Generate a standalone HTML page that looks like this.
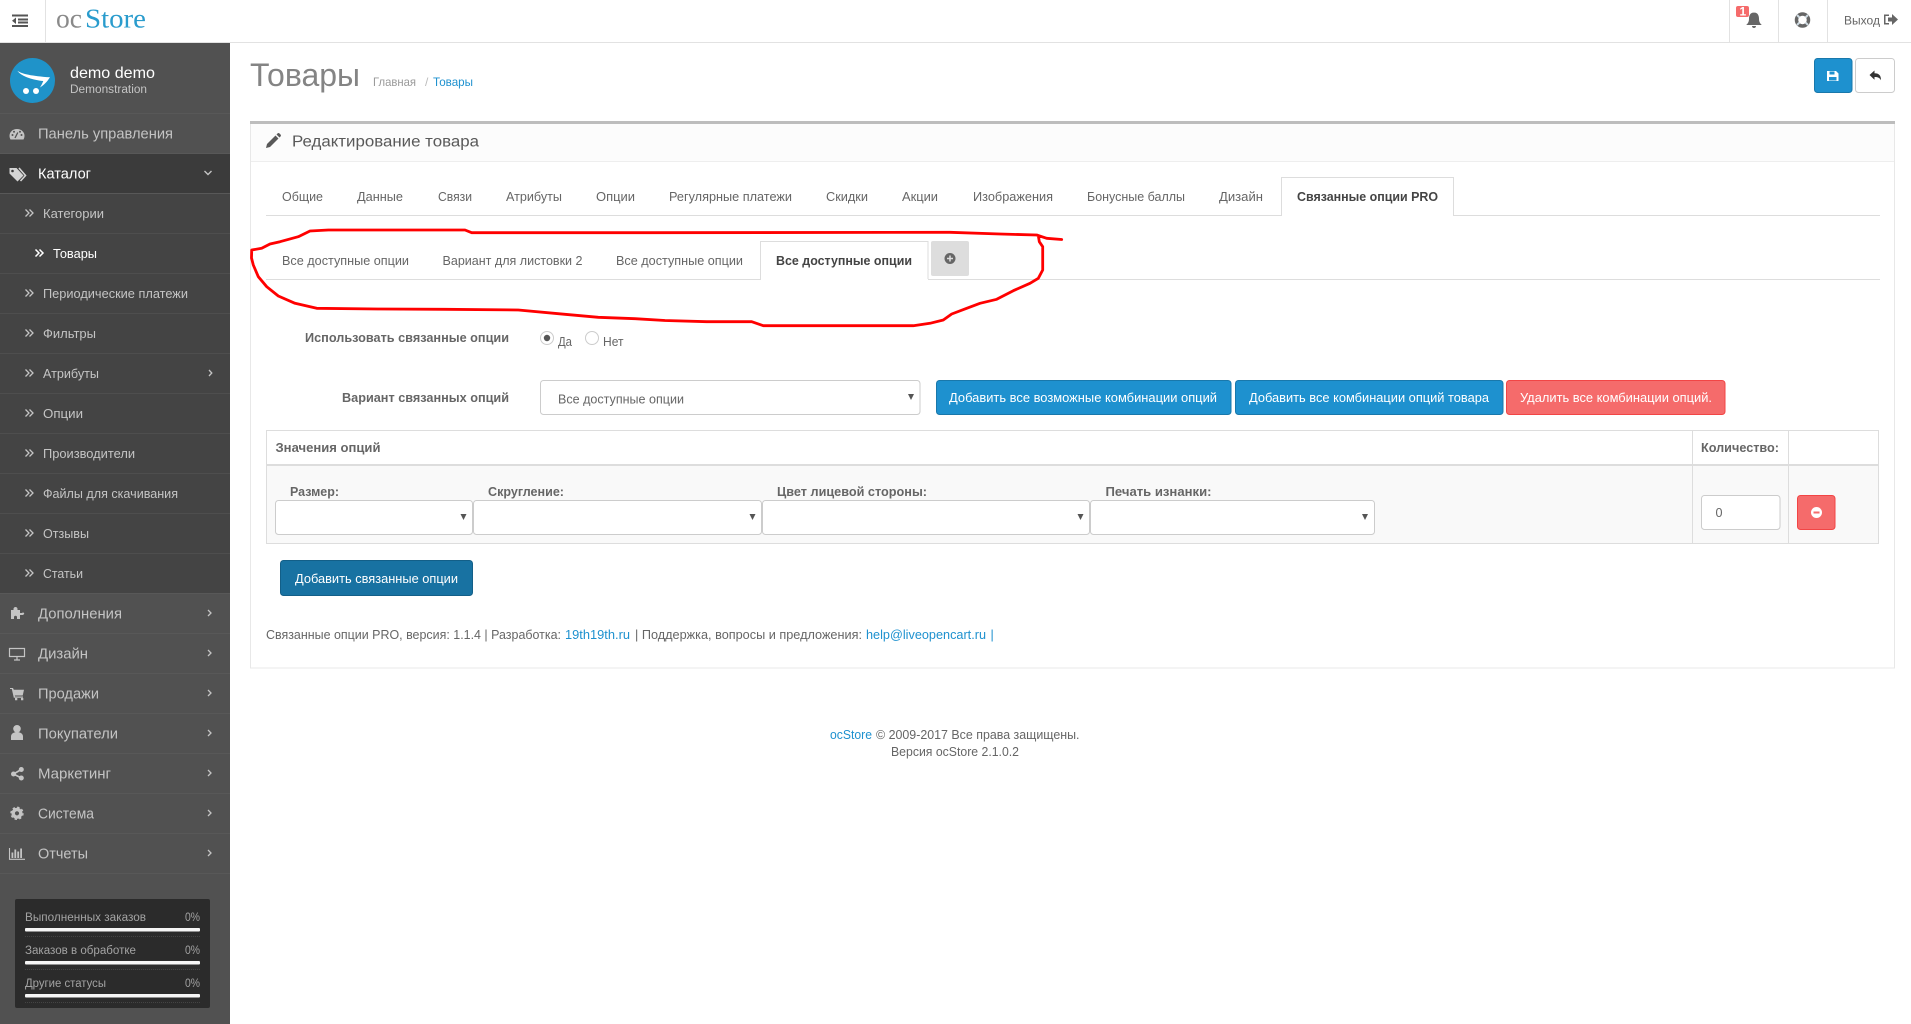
<!DOCTYPE html>
<html lang="ru"><head><meta charset="utf-8"><title>Товары</title>
<style>
html,body{margin:0;padding:0;width:1911px;height:1024px;overflow:hidden;background:#fff}
svg{display:block}
text{font-family:"Liberation Sans",Arial,sans-serif;font-size:12.5px;fill:#666}
.b{font-weight:bold}
.t{font-size:15px;fill:#c4c4c4}
.s{font-size:12.5px;fill:#c4c4c4}
.w{fill:#fff}
.a{fill:#1e91cf}
.st{font-size:11.5px;fill:#a3a3a3}
.ic{fill:#c4c4c4}
.sel{fill:#fff;stroke:#ccc}
.ar{fill:#555}
</style></head><body>
<svg xmlns="http://www.w3.org/2000/svg" width="1911" height="1024" viewBox="0 0 1911 1024">
<rect width="1911" height="1024" fill="#fff"/>

<!-- header -->
<rect x="0" y="42" width="1911" height="1" fill="#e2e2e2"/>
<rect x="45" y="0" width="1" height="42" fill="#e2e2e2"/>
<path d="M12 14.500h16v2h-16zM18 18.500h10v2h-10zM18 21.500h10v2h-10zM12 25h16v2h-16zM16 17.500v6.500l-4-3.300z" fill="#555"/>
<text x="56" y="27.500" textLength="26" lengthAdjust="spacingAndGlyphs" style="font-family:'Liberation Serif',serif;font-size:27px;fill:#8a8a8a">oc</text>
<text x="85" y="27.500" textLength="61" lengthAdjust="spacingAndGlyphs" style="font-family:'Liberation Serif',serif;font-size:27px;fill:#2a9ccd">Store</text>
<rect x="1729" y="0" width="1" height="42" fill="#e2e2e2"/>
<rect x="1778" y="0" width="1" height="42" fill="#e2e2e2"/>
<rect x="1827" y="0" width="1" height="42" fill="#e2e2e2"/>
<path d="M1754 12.500c-3.500 0-5 2.800-5 6 0 3.500-1 4.800-2.800 6.500h15.600c-1.800-1.700-2.800-3-2.800-6.500 0-3.200-1.500-6-5-6zM1752 26h4c0 1.300-.9 2-2 2s-2-.7-2-2z" fill="#666"/>
<rect x="1736" y="6" width="13" height="11" rx="2" fill="#f56b6b"/>
<text x="1739.500" y="15.500" class="b w" style="font-size:12px">1</text>
<circle cx="1802.500" cy="20" r="6" fill="none" stroke="#666" stroke-width="3.500"/>
<path d="M1797 15l2.500 2.500M1808 15l-2.500 2.500M1797 25l2.500-2.500M1808 25l-2.500-2.500" stroke="#cfdbe3" stroke-width="2"/>
<text x="1844" y="24.500" textLength="36" lengthAdjust="spacingAndGlyphs" style="font-size:12px">Выход</text>
<path d="M1889 14.500h-5v10h5v-1.500h-3.500v-7h3.500z" fill="#666"/><path d="M1888 17.500h4v-3.500l6 5.500-6 5.500v-3.500h-4z" fill="#666"/>

<!-- sidebar -->
<rect x="0" y="43" width="230" height="981" fill="#515151"/>
<rect x="0" y="153" width="230" height="40" fill="#3b3b3b"/>
<rect x="0" y="193" width="230" height="400" fill="#444"/>
<circle cx="32.500" cy="80.500" r="22.500" fill="#1f93c9"/>
<path d="M17.300 70.700C22 74 32 76 50 77.300 47 82 44 85 40 87.500 41.500 85 42.500 83 43.300 81 34 80 22 77 17.300 70.700z" fill="#fff"/>
<circle cx="26" cy="91" r="3" fill="#fff"/><circle cx="36" cy="91" r="3" fill="#fff"/>
<text x="70" y="78" textLength="85" lengthAdjust="spacingAndGlyphs" class="w" style="font-size:16px">demo demo</text>
<text x="70" y="93" textLength="77" lengthAdjust="spacingAndGlyphs" style="font-size:11.500px;fill:#c4c4c4">Demonstration</text>

<g fill="#585858">
<rect x="0" y="113" width="230" height="1"/><rect x="0" y="153" width="230" height="1"/><rect x="0" y="193" width="230" height="1"/>
<rect x="0" y="593" width="230" height="1"/><rect x="0" y="633" width="230" height="1"/><rect x="0" y="673" width="230" height="1"/><rect x="0" y="713" width="230" height="1"/><rect x="0" y="753" width="230" height="1"/><rect x="0" y="793" width="230" height="1"/><rect x="0" y="833" width="230" height="1"/><rect x="0" y="873" width="230" height="1"/>
</g>
<g fill="#4e4e4e">
<rect x="0" y="233" width="230" height="1"/><rect x="0" y="273" width="230" height="1"/><rect x="0" y="313" width="230" height="1"/><rect x="0" y="353" width="230" height="1"/><rect x="0" y="393" width="230" height="1"/><rect x="0" y="433" width="230" height="1"/><rect x="0" y="473" width="230" height="1"/><rect x="0" y="513" width="230" height="1"/><rect x="0" y="553" width="230" height="1"/>
</g>

<text x="38" y="138.500" textLength="135" lengthAdjust="spacingAndGlyphs" class="t">Панель управления</text>
<text x="38" y="178.500" textLength="53" lengthAdjust="spacingAndGlyphs" class="t w">Каталог</text>
<text x="43" y="218" textLength="61" lengthAdjust="spacingAndGlyphs" class="s">Категории</text>
<text x="53" y="258" textLength="44" lengthAdjust="spacingAndGlyphs" class="s w">Товары</text>
<text x="43" y="298" textLength="145" lengthAdjust="spacingAndGlyphs" class="s">Периодические платежи</text>
<text x="43" y="338" textLength="53" lengthAdjust="spacingAndGlyphs" class="s">Фильтры</text>
<text x="43" y="378" textLength="56" lengthAdjust="spacingAndGlyphs" class="s">Атрибуты</text>
<text x="43" y="418" textLength="40" lengthAdjust="spacingAndGlyphs" class="s">Опции</text>
<text x="43" y="458" textLength="92" lengthAdjust="spacingAndGlyphs" class="s">Производители</text>
<text x="43" y="498" textLength="135" lengthAdjust="spacingAndGlyphs" class="s">Файлы для скачивания</text>
<text x="43" y="538" textLength="46" lengthAdjust="spacingAndGlyphs" class="s">Отзывы</text>
<text x="43" y="578" textLength="40" lengthAdjust="spacingAndGlyphs" class="s">Статьи</text>
<text x="38" y="618.500" textLength="84" lengthAdjust="spacingAndGlyphs" class="t">Дополнения</text>
<text x="38" y="658.500" textLength="50" lengthAdjust="spacingAndGlyphs" class="t">Дизайн</text>
<text x="38" y="698.500" textLength="61" lengthAdjust="spacingAndGlyphs" class="t">Продажи</text>
<text x="38" y="738.500" textLength="80" lengthAdjust="spacingAndGlyphs" class="t">Покупатели</text>
<text x="38" y="778.500" textLength="73" lengthAdjust="spacingAndGlyphs" class="t">Маркетинг</text>
<text x="38" y="818.500" textLength="56" lengthAdjust="spacingAndGlyphs" class="t">Система</text>
<text x="38" y="858.500" textLength="50" lengthAdjust="spacingAndGlyphs" class="t">Отчеты</text>

<!-- sub arrows -->
<g fill="none" stroke="#c4c4c4" stroke-width="1.300">
<path d="M25.500 209.500l3.500 3.500-3.500 3.500M29.500 209.500l3.500 3.500-3.500 3.500"/>
<path d="M25.500 289.500l3.500 3.500-3.500 3.500M29.500 289.500l3.500 3.500-3.500 3.500"/>
<path d="M25.500 329.500l3.500 3.500-3.500 3.500M29.500 329.500l3.500 3.500-3.500 3.500"/>
<path d="M25.500 369.500l3.500 3.500-3.500 3.500M29.500 369.500l3.500 3.500-3.500 3.500"/>
<path d="M25.500 409.500l3.500 3.500-3.500 3.500M29.500 409.500l3.500 3.500-3.500 3.500"/>
<path d="M25.500 449.500l3.500 3.500-3.500 3.500M29.500 449.500l3.500 3.500-3.500 3.500"/>
<path d="M25.500 489.500l3.500 3.500-3.500 3.500M29.500 489.500l3.500 3.500-3.500 3.500"/>
<path d="M25.500 529.500l3.500 3.500-3.500 3.500M29.500 529.500l3.500 3.500-3.500 3.500"/>
<path d="M25.500 569.500l3.500 3.500-3.500 3.500M29.500 569.500l3.500 3.500-3.500 3.500"/>
<path d="M35.500 249.500l3.500 3.500-3.500 3.500M39.500 249.500l3.500 3.500-3.500 3.500" stroke="#fff" stroke-width="1.500"/>
<path d="M204.500 171l3.500 3.500 3.500-3.500" stroke-width="1.400"/>
<path d="M209 370l2.800 3-2.800 3"/>
<path d="M208 610l3 3-3 3M208 650l3 3-3 3M208 690l3 3-3 3M208 730l3 3-3 3M208 770l3 3-3 3M208 810l3 3-3 3M208 850l3 3-3 3"/>
</g>

<!-- top icons -->
<path d="M10.500 139.500c-.7-1.300-1-2.500-1-3.700 0-3.800 3.300-6.800 7.500-6.800s7.500 3 7.500 6.800c0 1.200-.3 2.400-1 3.700z" class="ic"/>
<path d="M15 138l2.800-5.500" stroke="#515151" stroke-width="1.300"/><circle cx="12.500" cy="135" r="1" fill="#515151"/><circle cx="21.500" cy="135" r="1" fill="#515151"/><circle cx="14" cy="131.800" r="1" fill="#515151"/><circle cx="20" cy="131.800" r="1" fill="#515151"/>
<path d="M9.500 168h7l7 7.500-6 6-8-8z" fill="#d4d4d4"/><path d="M19 168l6.500 7.500-5 5.500" fill="none" stroke="#d4d4d4" stroke-width="1.600"/><circle cx="12.500" cy="171" r="1.300" fill="#3b3b3b"/>
<path d="M11 610h2.500v-1.200c0-1 1-1.800 2-1.800s2 .8 2 1.800v1.200h2.500v3h2c.8-.8 1.500-.6 2 0s0 2-2 2h-2v4H17v-2c0-.8-.7-1.300-1.500-1.300s-1.500.5-1.500 1.300v2H11z" class="ic"/>
<path d="M9.500 648.500h15v8h-15zM14 660h6M17 656.500v3.500" fill="none" stroke="#c4c4c4" stroke-width="1.200"/>
<path d="M10 688h3l.8 1.800h10.200l-1.300 5.700h-7.900l.3 1h7.900v1.200h-9.200l-2-8.700h-1.800zM15 698h2.300v2.200H15zM21 698h2.300v2.200H21z" class="ic"/>
<circle cx="17" cy="728.800" r="3.800" class="ic"/><path d="M11 740v-3.500c0-2.700 2.700-4.500 6-4.500s6 1.800 6 4.500v3.500z" class="ic"/>
<circle cx="21.300" cy="769.500" r="2.500" class="ic"/><circle cx="13.500" cy="774" r="2.500" class="ic"/><circle cx="21.300" cy="778" r="2.500" class="ic"/><path d="M13.500 774l7.800-4.500M13.500 774l7.800 4" stroke="#c4c4c4" stroke-width="1.600"/>
<circle cx="17" cy="813.300" r="3.800" fill="none" stroke="#c4c4c4" stroke-width="3.400"/><circle cx="17" cy="813.300" r="6" fill="none" stroke="#c4c4c4" stroke-width="1.400" stroke-dasharray="2.400 2.300"/>
<path d="M9.500 848v11.300h15.500" fill="none" stroke="#c4c4c4" stroke-width="1.100"/><path d="M11.500 852.500h1.800v5.500h-1.800zM14.400 849.500h1.800v8.500h-1.800zM17.300 851.500h1.800v6.500h-1.800zM20.200 848.500h1.800v9.500h-1.800z" class="ic"/>

<!-- stats -->
<rect x="15" y="899" width="195" height="109" rx="2" fill="#2b2b2b"/>
<text x="25" y="921" textLength="121" lengthAdjust="spacingAndGlyphs" class="st">Выполненных заказов</text>
<text x="185" y="921" textLength="15" lengthAdjust="spacingAndGlyphs" class="st">0%</text>
<rect x="25" y="928" width="175" height="3.500" rx="1" fill="#f5f5f5"/>
<text x="25" y="954" textLength="111" lengthAdjust="spacingAndGlyphs" class="st">Заказов в обработке</text>
<text x="185" y="954" textLength="15" lengthAdjust="spacingAndGlyphs" class="st">0%</text>
<rect x="25" y="961" width="175" height="3.500" rx="1" fill="#f5f5f5"/>
<text x="25" y="987" textLength="81" lengthAdjust="spacingAndGlyphs" class="st">Другие статусы</text>
<text x="185" y="987" textLength="15" lengthAdjust="spacingAndGlyphs" class="st">0%</text>
<rect x="25" y="994" width="175" height="3.500" rx="1" fill="#f5f5f5"/>
<path d="M25 936.500h175M25 969.500h175M25 1002.500h175" stroke="#444" stroke-dasharray="1 1"/>

<!-- page header -->
<text x="250" y="86" textLength="110" lengthAdjust="spacingAndGlyphs" style="font-size:32px;fill:#848484">Товары</text>
<text x="373" y="86" textLength="43" lengthAdjust="spacingAndGlyphs" style="font-size:12px;fill:#999">Главная</text>
<text x="425" y="86" style="font-size:12px;fill:#bbb">/</text>
<text x="433" y="86" textLength="40" lengthAdjust="spacingAndGlyphs" class="a" style="font-size:12px">Товары</text>
<rect x="1814.500" y="58.500" width="37.500" height="34" rx="3" fill="#1e91cf" stroke="#1978ab"/>
<path d="M1827 71h9l2.500 2.500V81h-11.500z" fill="#fff"/><rect x="1829.500" y="71.500" width="5" height="3" fill="#1e91cf"/><rect x="1829" y="77" width="7.500" height="3.500" fill="#1e91cf"/>
<rect x="1855.500" y="58.500" width="39" height="34" rx="3" fill="#fff" stroke="#ccc"/>
<path d="M1869.500 75l5-4.500v2.800c4.500 0 6.500 2.200 6.500 7-1.200-2.400-3-3.300-6.500-3.300v2.700z" fill="#333"/>

<!-- panel -->
<rect x="250.500" y="122" width="1644" height="546" fill="#fff" stroke="#e8e8e8"/>
<rect x="251" y="124" width="1643" height="37" fill="#fcfcfc"/>
<rect x="251" y="161" width="1643" height="1" fill="#eee"/>
<rect x="250" y="121" width="1645" height="3" fill="#bdbdbd"/>
<path d="M266 148l1-4 8.500-8.500 3 3-8.500 8.500zM276.500 134.500l1-1c.6-.6 1.400-.6 2 0l1 1c.6.6.6 1.400 0 2l-1 1z" fill="#595959"/>
<text x="292" y="146.500" textLength="187" lengthAdjust="spacingAndGlyphs" style="font-size:15.500px;fill:#595959">Редактирование товара</text>

<!-- tabs 1 -->
<rect x="266" y="215" width="1614" height="1" fill="#ddd"/>
<path d="M1281.500 215.500V177.500h172v38" fill="#fff" stroke="#ddd"/>
<rect x="1282" y="215" width="171" height="2" fill="#fff"/>
<text x="282" y="201" textLength="41" lengthAdjust="spacingAndGlyphs">Общие</text>
<text x="357" y="201" textLength="46" lengthAdjust="spacingAndGlyphs">Данные</text>
<text x="438" y="201" textLength="34" lengthAdjust="spacingAndGlyphs">Связи</text>
<text x="506" y="201" textLength="56" lengthAdjust="spacingAndGlyphs">Атрибуты</text>
<text x="596" y="201" textLength="39" lengthAdjust="spacingAndGlyphs">Опции</text>
<text x="669" y="201" textLength="123" lengthAdjust="spacingAndGlyphs">Регулярные платежи</text>
<text x="826" y="201" textLength="42" lengthAdjust="spacingAndGlyphs">Скидки</text>
<text x="902" y="201" textLength="36" lengthAdjust="spacingAndGlyphs">Акции</text>
<text x="973" y="201" textLength="80" lengthAdjust="spacingAndGlyphs">Изображения</text>
<text x="1087" y="201" textLength="98" lengthAdjust="spacingAndGlyphs">Бонусные баллы</text>
<text x="1219" y="201" textLength="44" lengthAdjust="spacingAndGlyphs">Дизайн</text>
<text x="1297" y="201" textLength="141" lengthAdjust="spacingAndGlyphs" class="b" style="fill:#444">Связанные опции PRO</text>

<!-- tabs 2 -->
<rect x="266" y="279" width="1614" height="1" fill="#ddd"/>
<path d="M760.500 279.500V241.500h167.500v38" fill="#fff" stroke="#ddd"/>
<rect x="761" y="279" width="167" height="2" fill="#fff"/>
<text x="282" y="265" textLength="127" lengthAdjust="spacingAndGlyphs">Все доступные опции</text>
<text x="442.500" y="265" textLength="140" lengthAdjust="spacingAndGlyphs">Вариант для листовки 2</text>
<text x="616" y="265" textLength="127" lengthAdjust="spacingAndGlyphs">Все доступные опции</text>
<text x="776" y="265" textLength="136" lengthAdjust="spacingAndGlyphs" class="b" style="fill:#444">Все доступные опции</text>
<rect x="931" y="241" width="38" height="35" rx="2" fill="#ddd"/>
<circle cx="950" cy="258.500" r="5.500" fill="#666"/><path d="M947 258.500h6M950 255.500v6" stroke="#ddd" stroke-width="1.500"/>

<!-- form -->
<text x="305" y="342" textLength="204" lengthAdjust="spacingAndGlyphs" class="b">Использовать связанные опции</text>
<circle cx="547" cy="338" r="6.500" fill="#fff" stroke="#ccc"/><circle cx="547" cy="338" r="3.200" fill="#555"/>
<text x="558" y="346" textLength="14" lengthAdjust="spacingAndGlyphs">Да</text>
<circle cx="592" cy="338" r="6.500" fill="#fff" stroke="#ccc"/>
<text x="603" y="346" textLength="20.500" lengthAdjust="spacingAndGlyphs">Нет</text>

<text x="342" y="402" textLength="167" lengthAdjust="spacingAndGlyphs" class="b">Вариант связанных опций</text>
<rect x="540.500" y="380.500" width="379.500" height="34" rx="3" class="sel"/>
<text x="558" y="403.500" textLength="126" lengthAdjust="spacingAndGlyphs">Все доступные опции</text>
<path d="M908 394h6l-3 6z" class="ar"/>

<rect x="936.500" y="380.500" width="294.500" height="34" rx="3" fill="#1e91cf" stroke="#1978ab"/>
<text x="949" y="402" textLength="268" lengthAdjust="spacingAndGlyphs" class="w">Добавить все возможные комбинации опций</text>
<rect x="1235.500" y="380.500" width="267.500" height="34" rx="3" fill="#1e91cf" stroke="#1978ab"/>
<text x="1249" y="402" textLength="240" lengthAdjust="spacingAndGlyphs" class="w">Добавить все комбинации опций товара</text>
<rect x="1506.500" y="380.500" width="218.500" height="34" rx="3" fill="#f56b6b" stroke="#f24545"/>
<text x="1520" y="402" textLength="192" lengthAdjust="spacingAndGlyphs" class="w">Удалить все комбинации опций.</text>

<!-- table -->
<rect x="266.500" y="430.500" width="1612" height="113" fill="#fff" stroke="#ddd"/>
<rect x="267" y="466" width="1611" height="77" fill="#f9f9f9"/>
<rect x="267" y="464" width="1611" height="2" fill="#ddd"/>
<rect x="1692" y="431" width="1" height="112" fill="#ddd"/>
<rect x="1788" y="431" width="1" height="112" fill="#ddd"/>
<text x="275.500" y="452" textLength="105" lengthAdjust="spacingAndGlyphs" class="b">Значения опций</text>
<text x="1701" y="452" textLength="78" lengthAdjust="spacingAndGlyphs" class="b">Количество:</text>

<text x="290" y="496" textLength="49" lengthAdjust="spacingAndGlyphs" class="b">Размер:</text>
<text x="488" y="496" textLength="76" lengthAdjust="spacingAndGlyphs" class="b">Скругление:</text>
<text x="777" y="496" textLength="150" lengthAdjust="spacingAndGlyphs" class="b">Цвет лицевой стороны:</text>
<text x="1105.500" y="496" textLength="106" lengthAdjust="spacingAndGlyphs" class="b">Печать изнанки:</text>

<rect x="275.500" y="500.500" width="197" height="34" rx="3" class="sel"/>
<rect x="473.500" y="500.500" width="288" height="34" rx="3" class="sel"/>
<rect x="762.500" y="500.500" width="327" height="34" rx="3" class="sel"/>
<rect x="1090.500" y="500.500" width="284" height="34" rx="3" class="sel"/>
<path d="M460.500 514h6l-3 6zM749.500 514h6l-3 6zM1077.500 514h6l-3 6zM1362 514h6l-3 6z" class="ar"/>

<rect x="1701.500" y="495.500" width="78.500" height="34" rx="3" class="sel"/>
<text x="1715.500" y="517" textLength="7" lengthAdjust="spacingAndGlyphs">0</text>
<rect x="1797.500" y="495.500" width="37.500" height="34" rx="3" fill="#f56b6b" stroke="#f24545"/>
<circle cx="1816.500" cy="512.500" r="5.500" fill="#fff"/><rect x="1813.500" y="511.500" width="6" height="2" fill="#f56b6b"/>

<rect x="280.500" y="560.500" width="192" height="35" rx="3" fill="#1872a2" stroke="#135f88"/>
<text x="295" y="583" textLength="163" lengthAdjust="spacingAndGlyphs" class="w">Добавить связанные опции</text>

<text x="266" y="639" textLength="295" lengthAdjust="spacingAndGlyphs">Связанные опции PRO, версия: 1.1.4 | Разработка:</text>
<text x="565" y="639" textLength="65" lengthAdjust="spacingAndGlyphs" class="a">19th19th.ru</text>
<text x="635" y="639" textLength="227" lengthAdjust="spacingAndGlyphs">| Поддержка, вопросы и предложения:</text>
<text x="866" y="639" textLength="120" lengthAdjust="spacingAndGlyphs" class="a">help@liveopencart.ru</text>
<text x="990.500" y="639" class="a">|</text>

<!-- footer -->
<text x="830" y="739" textLength="42" lengthAdjust="spacingAndGlyphs" class="a">ocStore</text>
<text x="876" y="739" textLength="203.500" lengthAdjust="spacingAndGlyphs">© 2009-2017 Все права защищены.</text>
<text x="891" y="756" textLength="128" lengthAdjust="spacingAndGlyphs">Версия ocStore 2.1.0.2</text>

<!-- red scribble -->
<path d="M1061.700 239.500L1046.700 238.300 1036.700 235 1000 234 950 232.300 650 232.700 471.700 232.700 465 230 328.300 230 310 231 298.300 236.700 280 241.700 270 244 261.700 248.300 251.700 250 251.500 258 253.300 265 258.300 276.700 266.700 286.700 278.300 296 295 303.300 316.700 308.300 378 309 445 309.300 518.300 310 565 314.300 598.300 317.300 635 318.700 665 320.500 706.700 321.700 751.700 321.700 763.300 325.700 913.300 325.700 930 323.300 943.300 320 951.700 314 966.700 308.300 980 303.300 996.700 299.300 1013.300 290.700 1030 283.300 1038.300 278.300 1042.700 270 1042.700 246.700 1039.300 241.700 1038.300 235.500" fill="none" stroke="#f00" stroke-width="2.800" stroke-linejoin="round" stroke-linecap="round"/>
</svg>
</body></html>
